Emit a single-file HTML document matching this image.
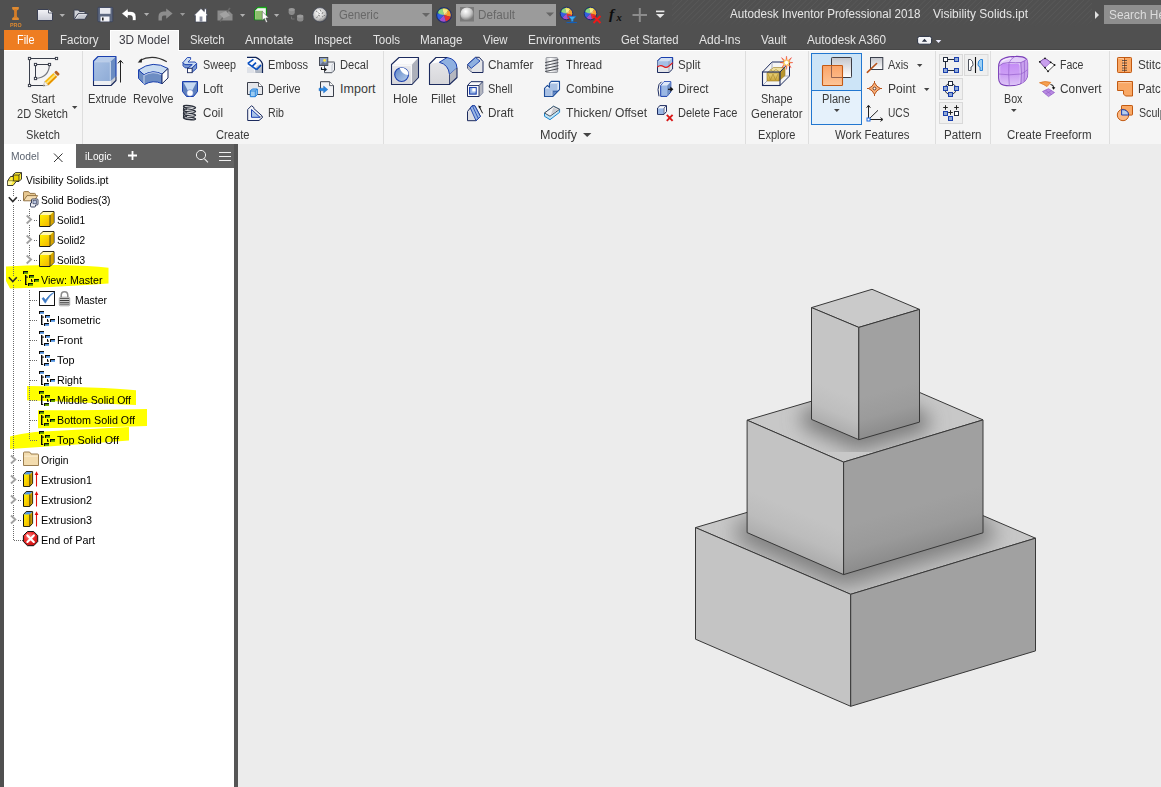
<!DOCTYPE html>
<html><head><meta charset="utf-8"><title>Autodesk Inventor Professional 2018 - Visibility Solids.ipt</title>
<style>
html,body{margin:0;padding:0}
body{width:1161px;height:787px;position:relative;overflow:hidden;background:#ececec;font-family:"Liberation Sans",sans-serif}
.t{position:absolute;white-space:nowrap;line-height:1;display:inline-block;transform-origin:0 0;}
svg{overflow:visible}
</style></head><body>
<div style="position:absolute;left:0px;top:0px;width:1161px;height:50px;background:#505050;"></div>
<div style="position:absolute;left:672px;top:0px;width:420px;height:27px;background:repeating-linear-gradient(135deg,rgba(255,255,255,0) 0px,rgba(255,255,255,0) 2.4px,rgba(255,255,255,0.05) 3.2px,rgba(255,255,255,0) 4px);-webkit-mask-image:linear-gradient(to bottom,#000 60%,transparent);mask-image:linear-gradient(to bottom,#000 60%,transparent)"></div>
<div style="position:absolute;left:0px;top:49px;width:1161px;height:1px;background:#474747;"></div>
<div style="position:absolute;left:0px;top:50px;width:4px;height:737px;background:#505050;"></div>
<div style="position:absolute;left:4px;top:50px;width:1157px;height:94px;background:#f5f5f5;"></div>
<div style="position:absolute;left:4px;top:30px;width:44px;height:20px;background:#ee7d21;"></div>
<span class="t " style="left:17.1px;top:34.3px;font-size:12.5px;color:#ffffff;transform:scaleX(0.870);">File</span>
<div style="position:absolute;left:110px;top:30px;width:69px;height:21px;background:#f5f5f5;border-top:1px solid #fff;border-left:1px solid #fff;border-right:1px solid #fff;box-sizing:border-box"></div>
<div style="position:absolute;left:4px;top:50px;width:106px;height:1px;background:#ffffff;"></div>
<div style="position:absolute;left:179px;top:50px;width:982px;height:1px;background:#ffffff;"></div>
<span class="t " style="left:60.1px;top:34.3px;font-size:12.5px;color:#e4e4e4;transform:scaleX(0.924);">Factory</span>
<span class="t " style="left:119.1px;top:34.3px;font-size:12.5px;color:#3a3a42;transform:scaleX(0.944);">3D Model</span>
<span class="t " style="left:190.1px;top:34.3px;font-size:12.5px;color:#e4e4e4;transform:scaleX(0.903);">Sketch</span>
<span class="t " style="left:245.1px;top:34.3px;font-size:12.5px;color:#e4e4e4;transform:scaleX(0.969);">Annotate</span>
<span class="t " style="left:314.1px;top:34.3px;font-size:12.5px;color:#e4e4e4;transform:scaleX(0.930);">Inspect</span>
<span class="t " style="left:372.6px;top:34.3px;font-size:12.5px;color:#e4e4e4;transform:scaleX(0.925);">Tools</span>
<span class="t " style="left:420.1px;top:34.3px;font-size:12.5px;color:#e4e4e4;transform:scaleX(0.941);">Manage</span>
<span class="t " style="left:483.1px;top:34.3px;font-size:12.5px;color:#e4e4e4;transform:scaleX(0.912);">View</span>
<span class="t " style="left:528.1px;top:34.3px;font-size:12.5px;color:#e4e4e4;transform:scaleX(0.948);">Environments</span>
<span class="t " style="left:621.1px;top:34.3px;font-size:12.5px;color:#e4e4e4;transform:scaleX(0.899);">Get Started</span>
<span class="t " style="left:699.1px;top:34.3px;font-size:12.5px;color:#e4e4e4;transform:scaleX(0.964);">Add-Ins</span>
<span class="t " style="left:761.1px;top:34.3px;font-size:12.5px;color:#e4e4e4;transform:scaleX(0.925);">Vault</span>
<span class="t " style="left:806.6px;top:34.3px;font-size:12.5px;color:#e4e4e4;transform:scaleX(0.939);">Autodesk A360</span>
<span class="t " style="left:730.1px;top:8.3px;font-size:12.5px;color:#e6e6e6;transform:scaleX(0.932);">Autodesk Inventor Professional 2018</span>
<span class="t " style="left:932.6px;top:8.3px;font-size:12.5px;color:#e6e6e6;transform:scaleX(0.958);">Visibility Solids.ipt</span>
<div style="position:absolute;left:332px;top:4px;width:100px;height:22px;background:#9b9b9b;"></div>
<span class="t " style="left:339.1px;top:9.3px;font-size:12.5px;color:#686868;transform:scaleX(0.903);">Generic</span>
<div style="position:absolute;left:456px;top:4px;width:100px;height:22px;background:#9b9b9b;"></div>
<span class="t " style="left:477.6px;top:9.3px;font-size:12.5px;color:#686868;transform:scaleX(0.934);">Default</span>
<div style="position:absolute;left:1104px;top:5px;width:57px;height:19px;background:#8e8e8e;"></div>
<span class="t " style="left:1108.6px;top:9.3px;font-size:12.5px;color:#dcdcdc;transform:scaleX(0.948);">Search Help &amp; Commands...</span>
<div style="position:absolute;left:82px;top:51px;width:1px;height:93px;background:#dedede;"></div>
<div style="position:absolute;left:383px;top:51px;width:1px;height:93px;background:#dedede;"></div>
<div style="position:absolute;left:745px;top:51px;width:1px;height:93px;background:#dedede;"></div>
<div style="position:absolute;left:808px;top:51px;width:1px;height:93px;background:#dedede;"></div>
<div style="position:absolute;left:935px;top:51px;width:1px;height:93px;background:#dedede;"></div>
<div style="position:absolute;left:990px;top:51px;width:1px;height:93px;background:#dedede;"></div>
<div style="position:absolute;left:1109px;top:51px;width:1px;height:93px;background:#dedede;"></div>
<div style="position:absolute;left:811px;top:53px;width:49px;height:70px;background:#e5f1fb;border:1px solid #2277d0;box-sizing:content-box"></div>
<div style="position:absolute;left:812px;top:54px;width:49px;height:36px;background:#cce4f7;border-bottom:1px solid #2277d0"></div>
<span class="t " style="left:30.6px;top:93.3px;font-size:12.5px;color:#3a3a3a;transform:scaleX(0.910);">Start</span>
<span class="t " style="left:16.6px;top:108.3px;font-size:12.5px;color:#3a3a3a;transform:scaleX(0.884);">2D Sketch</span>
<span class="t " style="left:88.1px;top:93.3px;font-size:12.5px;color:#3a3a3a;transform:scaleX(0.894);">Extrude</span>
<span class="t " style="left:133.1px;top:93.3px;font-size:12.5px;color:#3a3a3a;transform:scaleX(0.896);">Revolve</span>
<span class="t " style="left:393.1px;top:93.3px;font-size:12.5px;color:#3a3a3a;transform:scaleX(0.954);">Hole</span>
<span class="t " style="left:431.1px;top:93.3px;font-size:12.5px;color:#3a3a3a;transform:scaleX(0.929);">Fillet</span>
<span class="t " style="left:761.1px;top:93.3px;font-size:12.5px;color:#3a3a3a;transform:scaleX(0.872);">Shape</span>
<span class="t " style="left:751.1px;top:108.3px;font-size:12.5px;color:#3a3a3a;transform:scaleX(0.915);">Generator</span>
<span class="t " style="left:1004.1px;top:93.3px;font-size:12.5px;color:#3a3a3a;transform:scaleX(0.858);">Box</span>
<span class="t " style="left:822.1px;top:93.3px;font-size:12.5px;color:#3a3a3a;transform:scaleX(0.891);">Plane</span>
<span class="t " style="left:25.6px;top:129.3px;font-size:12.5px;color:#3a3a3a;transform:scaleX(0.890);">Sketch</span>
<span class="t " style="left:216.1px;top:129.3px;font-size:12.5px;color:#3a3a3a;transform:scaleX(0.893);">Create</span>
<span class="t " style="left:539.6px;top:129.3px;font-size:12.5px;color:#3a3a3a;transform:scaleX(1.005);">Modify</span>
<span class="t " style="left:758.1px;top:129.3px;font-size:12.5px;color:#3a3a3a;transform:scaleX(0.885);">Explore</span>
<span class="t " style="left:835.1px;top:129.3px;font-size:12.5px;color:#3a3a3a;transform:scaleX(0.911);">Work Features</span>
<span class="t " style="left:944.1px;top:129.3px;font-size:12.5px;color:#3a3a3a;transform:scaleX(0.930);">Pattern</span>
<span class="t " style="left:1007.1px;top:129.3px;font-size:12.5px;color:#3a3a3a;transform:scaleX(0.922);">Create Freeform</span>
<span class="t " style="left:203.1px;top:59.3px;font-size:12.5px;color:#3a3a3a;transform:scaleX(0.863);">Sweep</span>
<span class="t " style="left:203.1px;top:83.3px;font-size:12.5px;color:#3a3a3a;transform:scaleX(0.958);">Loft</span>
<span class="t " style="left:203.1px;top:107.3px;font-size:12.5px;color:#3a3a3a;transform:scaleX(0.928);">Coil</span>
<span class="t " style="left:268.1px;top:59.3px;font-size:12.5px;color:#3a3a3a;transform:scaleX(0.886);">Emboss</span>
<span class="t " style="left:268.1px;top:83.3px;font-size:12.5px;color:#3a3a3a;transform:scaleX(0.900);">Derive</span>
<span class="t " style="left:268.1px;top:107.3px;font-size:12.5px;color:#3a3a3a;transform:scaleX(0.853);">Rib</span>
<span class="t " style="left:340.1px;top:59.3px;font-size:12.5px;color:#3a3a3a;transform:scaleX(0.892);">Decal</span>
<span class="t " style="left:340.1px;top:83.3px;font-size:12.5px;color:#3a3a3a;">Import</span>
<span class="t " style="left:488.1px;top:59.3px;font-size:12.5px;color:#3a3a3a;transform:scaleX(0.949);">Chamfer</span>
<span class="t " style="left:488.1px;top:83.3px;font-size:12.5px;color:#3a3a3a;transform:scaleX(0.881);">Shell</span>
<span class="t " style="left:488.1px;top:107.3px;font-size:12.5px;color:#3a3a3a;transform:scaleX(0.942);">Draft</span>
<span class="t " style="left:565.6px;top:59.3px;font-size:12.5px;color:#3a3a3a;transform:scaleX(0.909);">Thread</span>
<span class="t " style="left:565.6px;top:83.3px;font-size:12.5px;color:#3a3a3a;transform:scaleX(0.960);">Combine</span>
<span class="t " style="left:565.6px;top:107.3px;font-size:12.5px;color:#3a3a3a;transform:scaleX(0.966);">Thicken/ Offset</span>
<span class="t " style="left:678.1px;top:59.3px;font-size:12.5px;color:#3a3a3a;transform:scaleX(0.925);">Split</span>
<span class="t " style="left:678.1px;top:83.3px;font-size:12.5px;color:#3a3a3a;transform:scaleX(0.935);">Direct</span>
<span class="t " style="left:678.1px;top:107.3px;font-size:12.5px;color:#3a3a3a;transform:scaleX(0.883);">Delete Face</span>
<span class="t " style="left:888.1px;top:59.3px;font-size:12.5px;color:#3a3a3a;transform:scaleX(0.868);">Axis</span>
<span class="t " style="left:888.1px;top:83.3px;font-size:12.5px;color:#3a3a3a;transform:scaleX(0.965);">Point</span>
<span class="t " style="left:888.1px;top:107.3px;font-size:12.5px;color:#3a3a3a;transform:scaleX(0.815);">UCS</span>
<span class="t " style="left:1060.1px;top:59.3px;font-size:12.5px;color:#3a3a3a;transform:scaleX(0.845);">Face</span>
<span class="t " style="left:1060.1px;top:83.3px;font-size:12.5px;color:#3a3a3a;transform:scaleX(0.949);">Convert</span>
<span class="t " style="left:1138.1px;top:59.3px;font-size:12.5px;color:#3a3a3a;transform:scaleX(0.940);">Stitch</span>
<span class="t " style="left:1138.4px;top:83.3px;font-size:12.5px;color:#3a3a3a;transform:scaleX(0.900);">Patch</span>
<span class="t " style="left:1138.6px;top:107.3px;font-size:12.5px;color:#3a3a3a;transform:scaleX(0.850);">Sculpt</span>
<div style="position:absolute;left:4px;top:144px;width:230px;height:643px;background:#ffffff;"></div>
<div style="position:absolute;left:76px;top:144px;width:162px;height:24px;background:#626262;"></div>
<div style="position:absolute;left:234px;top:144px;width:4px;height:643px;background:#555555;"></div>
<span class="t " style="left:11.1px;top:150.6px;font-size:11px;color:#5c6470;transform:scaleX(0.934);">Model</span>
<span class="t " style="left:84.6px;top:150.6px;font-size:11px;color:#ffffff;transform:scaleX(0.921);">iLogic</span>
<svg style="position:absolute;left:0;top:0" width="240" height="787" viewBox="0 0 240 787"><path d="M6,266.5 Q30,264.6 60,265 Q90,265.6 108.5,267.8 L108.5,283.5 Q80,285.6 40,287.6 L10,288.4 L6,281 Z" fill="#ffff00"/><path d="M27,386 Q60,386.4 90,387.6 Q120,388.8 136,390.2 L136,405 Q100,403.6 60,401.6 L27,400.2 Z" fill="#ffff00"/><path d="M38,410.2 Q90,410.4 147,409 L147,426 Q100,427.4 38,428.2 Z" fill="#ffff00"/><path d="M35,432 Q80,429.4 129,427 L129,440.6 Q70,445.4 10,449 L10,436.4 Q20,434 35,432 Z" fill="#ffff00"/></svg>
<span class="t " style="left:25.6px;top:174.6px;font-size:11px;color:#000000;transform:scaleX(0.946);">Visibility Solids.ipt</span>
<span class="t " style="left:41.1px;top:194.6px;font-size:11px;color:#000000;transform:scaleX(0.932);">Solid Bodies(3)</span>
<span class="t " style="left:57.1px;top:214.6px;font-size:11px;color:#000000;transform:scaleX(0.916);">Solid1</span>
<span class="t " style="left:57.1px;top:234.6px;font-size:11px;color:#000000;transform:scaleX(0.916);">Solid2</span>
<span class="t " style="left:57.1px;top:254.6px;font-size:11px;color:#000000;transform:scaleX(0.916);">Solid3</span>
<span class="t " style="left:41.1px;top:274.6px;font-size:11px;color:#000000;transform:scaleX(0.971);">View: Master</span>
<span class="t " style="left:74.6px;top:294.6px;font-size:11px;color:#000000;transform:scaleX(0.952);">Master</span>
<span class="t " style="left:57.1px;top:314.6px;font-size:11px;color:#000000;transform:scaleX(0.975);">Isometric</span>
<span class="t " style="left:57.1px;top:334.6px;font-size:11px;color:#000000;transform:scaleX(0.993);">Front</span>
<span class="t " style="left:57.1px;top:354.6px;font-size:11px;color:#000000;transform:scaleX(0.988);">Top</span>
<span class="t " style="left:57.1px;top:374.6px;font-size:11px;color:#000000;transform:scaleX(0.973);">Right</span>
<span class="t " style="left:57.1px;top:394.6px;font-size:11px;color:#000000;transform:scaleX(0.955);">Middle Solid Off</span>
<span class="t " style="left:57.1px;top:414.6px;font-size:11px;color:#000000;transform:scaleX(0.976);">Bottom Solid Off</span>
<span class="t " style="left:57.1px;top:434.6px;font-size:11px;color:#000000;transform:scaleX(0.987);">Top Solid Off</span>
<span class="t " style="left:41.1px;top:454.6px;font-size:11px;color:#000000;transform:scaleX(0.936);">Origin</span>
<span class="t " style="left:41.1px;top:474.6px;font-size:11px;color:#000000;transform:scaleX(0.981);">Extrusion1</span>
<span class="t " style="left:41.1px;top:494.6px;font-size:11px;color:#000000;transform:scaleX(0.981);">Extrusion2</span>
<span class="t " style="left:41.1px;top:514.6px;font-size:11px;color:#000000;transform:scaleX(0.981);">Extrusion3</span>
<span class="t " style="left:41.1px;top:534.6px;font-size:11px;color:#000000;transform:scaleX(0.981);">End of Part</span>
<svg style="position:absolute;left:0px;top:0px" width="1161" height="787" viewBox="0 0 1161 787"><defs><filter id="blur1" x="-30%" y="-30%" width="160%" height="160%"><feGaussianBlur stdDeviation="11"/></filter><filter id="blur2" x="-30%" y="-30%" width="160%" height="160%"><feGaussianBlur stdDeviation="9.5"/></filter><clipPath id="cbt"><polygon points="695.5,527.6 882.6,472.4 1035.5,538.2 850.7,594.3"/></clipPath><clipPath id="cmt"><polygon points="747.1,420.2 887.8,378.7 983,419.9 843.6,462.1"/></clipPath><linearGradient id="gml" gradientUnits="userSpaceOnUse" x1="747.1" y1="532.6" x2="763.1" y2="495.9"><stop offset="0" stop-color="#adadad"/><stop offset="0.45" stop-color="#bcbcbc"/><stop offset="1" stop-color="#c3c3c3"/></linearGradient><linearGradient id="gmr" gradientUnits="userSpaceOnUse" x1="843.6" y1="574.6" x2="830.4" y2="530.5"><stop offset="0" stop-color="#8c8c8c"/><stop offset="0.45" stop-color="#9a9a9a"/><stop offset="1" stop-color="#a0a0a0"/></linearGradient><linearGradient id="gtl" gradientUnits="userSpaceOnUse" x1="811.5" y1="419.4" x2="825.7" y2="386.3"><stop offset="0" stop-color="#adadad"/><stop offset="0.45" stop-color="#bebebe"/><stop offset="1" stop-color="#c5c5c5"/></linearGradient><linearGradient id="gtr" gradientUnits="userSpaceOnUse" x1="858.8" y1="439.7" x2="847.7" y2="401.3"><stop offset="0" stop-color="#8c8c8c"/><stop offset="0.45" stop-color="#9b9b9b"/><stop offset="1" stop-color="#a1a1a1"/></linearGradient></defs><polygon points="695.5,527.6 882.6,472.4 1035.5,538.2 850.7,594.3" fill="#c8c8c8"/><g clip-path="url(#cbt)"><polygon points="747.1,532.6 843.6,574.6 983,532.8 887.8,491.2" fill="#7e7e7e" filter="url(#blur1)" stroke="#7e7e7e" stroke-width="24" stroke-linejoin="round"/></g><polygon points="695.5,527.6 882.6,472.4 1035.5,538.2 850.7,594.3" fill="none" stroke="#383838" stroke-width="1" stroke-linejoin="round"/><polygon points="695.5,527.6 850.7,594.3 850.7,706.3 695.5,639.2" fill="#c4c4c4" stroke="#383838" stroke-width="1" stroke-linejoin="round"/><polygon points="850.7,594.3 1035.5,538.2 1035.5,650.9 850.7,706.3" fill="#a1a1a1" stroke="#383838" stroke-width="1" stroke-linejoin="round"/><polygon points="747.1,420.2 887.8,378.7 983,419.9 843.6,462.1" fill="#c8c8c8"/><g clip-path="url(#cmt)"><polygon points="811.5,419.4 858.8,439.7 919.5,422.1 872,401.4" fill="#7e7e7e" filter="url(#blur2)" stroke="#7e7e7e" stroke-width="22" stroke-linejoin="round"/></g><polygon points="747.1,420.2 887.8,378.7 983,419.9 843.6,462.1" fill="none" stroke="#383838" stroke-width="1" stroke-linejoin="round"/><polygon points="747.1,420.2 843.6,462.1 843.6,574.6 747.1,532.6" fill="url(#gml)" stroke="#383838" stroke-width="1" stroke-linejoin="round"/><polygon points="843.6,462.1 983,419.9 983,532.8 843.6,574.6" fill="url(#gmr)" stroke="#383838" stroke-width="1" stroke-linejoin="round"/><polygon points="811.5,307.6 872,289.3 919.5,309.4 858.8,327.4" fill="#cacaca" stroke="#383838" stroke-width="1" stroke-linejoin="round"/><polygon points="811.5,307.6 858.8,327.4 858.8,439.7 811.5,419.4" fill="url(#gtl)" stroke="#383838" stroke-width="1" stroke-linejoin="round"/><polygon points="858.8,327.4 919.5,309.4 919.5,422.1 858.8,439.7" fill="url(#gtr)" stroke="#383838" stroke-width="1" stroke-linejoin="round"/></svg>
<svg style="position:absolute;left:0px;top:0px" width="1161" height="787" viewBox="0 0 1161 787"><defs><linearGradient id="gdoc" x1="0" y1="0" x2="0" y2="1"><stop offset="0" stop-color="#f4f4f8"/><stop offset="1" stop-color="#c8cad4"/></linearGradient><radialGradient id="gsph" cx="0.4" cy="0.3" r="0.7"><stop offset="0" stop-color="#ffffff"/><stop offset="0.6" stop-color="#c8c8c8"/><stop offset="1" stop-color="#7a7a7a"/></radialGradient><radialGradient id="gtex" cx="0.4" cy="0.35" r="0.7"><stop offset="0" stop-color="#ffffff"/><stop offset="0.7" stop-color="#c0c0c0"/><stop offset="1" stop-color="#555"/></radialGradient></defs><path d="M12.2,7 H18.8 V9.2 Q17,9.6 16.8,11 V16 Q17,17.6 18.8,18 V20 H12.2 V18 Q14,17.6 14.2,16 V11 Q14,9.6 12.2,9.2 Z" fill="#e08a30"/><path d="M14.2,9 H16.8 V18 H14.2 Z" fill="#c87020" opacity="0.5"/><path d="M37.5,9.5 H48.5 L52.5,13 V20.5 H37.5 Z" fill="url(#gdoc)" stroke="#3b4052" stroke-width="1"/><path d="M48.5,9.5 V13 H52.5" fill="#fff" stroke="#3b4052" stroke-width="0.8"/><polygon points="59.5,14 65,14 62.25,17" fill="#b0b0b0"/><path d="M74,19 V10.5 Q74,10 74.5,10 H78.5 L79.5,11.5 H84.5 Q85,11.5 85,12 V13.5" fill="#d0d2d8" stroke="#3b4052" stroke-width="1"/><path d="M74.2,19.3 L78,13.7 H88.3 L84.8,19.3 Z" fill="#c4c7d0" stroke="#3b4052" stroke-width="1" stroke-linejoin="round"/><path d="M76,18.5 L78.8,14.6 H86.5" fill="none" stroke="#f2f2f6" stroke-width="0.8"/><rect x="97.8" y="7.3" width="15" height="14.4" rx="1" fill="#5d6880" stroke="#39415a" stroke-width="0.8"/><rect x="100" y="8" width="10.5" height="5.8" fill="#e9eaf0"/><rect x="100.5" y="16.5" width="9" height="5" fill="#f4f4f8"/><rect x="102" y="17.5" width="1.6" height="3" fill="#222"/><path d="M121.6,13.6 L128,8.6 V11.4 H131 Q136,11.6 136,16.8 V20.5 H132.4 V17.6 Q132.4,15.6 130.4,15.6 H128 V18.7 Z" fill="#ffffff" stroke="#3a3a3a" stroke-width="0.6"/><polygon points="144,13 149.2,13 146.6,16" fill="#b0b0b0"/><path d="M172.6,13.6 L166.2,8.6 V11.4 H163.4 Q158.5,11.6 158.5,16.8 V20.5 H161.9 V17.6 Q161.9,15.6 163.9,15.6 H166.2 V18.7 Z" fill="#8c8c8c"/><polygon points="180,13 185.2,13 182.6,16" fill="#9a9a9a"/><path d="M193.8,15.6 L201,8.4 L204.3,11.6 V8.8 H206.5 V13.8 L208.2,15.6 H206.6 V22 H195.4 V15.6 Z" fill="#ffffff" stroke="#3a3f50" stroke-width="0.7" stroke-linejoin="round"/><rect x="199.6" y="16.5" width="2.8" height="5.3" fill="#8a8fa0"/><path d="M217.5,10.5 H228.5 L232.5,14.5 V20.5 H217.5 Z" fill="#8c8c8c"/><path d="M220,21.5 L230,8" stroke="#6a6a6a" stroke-width="1.6" fill="none"/><path d="M219.5,14 L226,11 L230,15.5 L223.5,18.5 Z" fill="#a2a2a2"/><polygon points="240,14 245.2,14 242.6,17" fill="#b0b0b0"/><path d="M254.6,10.3 L257.8,7.4 H266.4 V16.8 L263.4,19.8 H254.6 Z" fill="#f4f4f4" stroke="#0e8a10" stroke-width="1.1" stroke-linejoin="round"/><rect x="255.2" y="10.8" width="7.6" height="8.6" fill="#8cbf6c"/><path d="M257.8,7.6 H266.2" stroke="#18b018" stroke-width="1.2"/><path d="M262.3,11.6 L262.3,20.3 L264.4,18.5 L266,22.6 L267.5,22 L265.9,18 L268.6,17.8 Z" fill="#ffffff" stroke="#444" stroke-width="0.5"/><polygon points="274,14 279.2,14 276.6,17" fill="#b0b0b0"/><rect x="288.6" y="8.4" width="6.2" height="6.6" rx="2.4" fill="#8a8a8a"/><ellipse cx="291.7" cy="9.6" rx="3.1" ry="1.6" fill="#9a9a9a"/><rect x="297" y="15" width="6.4" height="6.6" rx="2.4" fill="#8a8a8a"/><ellipse cx="300.2" cy="16.2" rx="3.2" ry="1.6" fill="#9a9a9a"/><path d="M291.5,16.5 V19 H294.5" stroke="#707070" stroke-width="1" fill="none"/><circle cx="320" cy="14.8" r="7.2" fill="url(#gtex)" stroke="#3a3f50" stroke-width="0.7"/><path d="M316,11 l1.5,1 M320,9.5 l1,2 M323,12 l-1,2 M318,15 l2,1 M322,17 l1.5,-1 M316.5,18 l1,-1.5 M320,19.5 l1,-1 M324,15 l1,1 M318.5,12.5 l1,1.5" stroke="#707070" stroke-width="0.8" fill="none"/><polygon points="422,13 430,13 426.0,17" fill="#666"/><path d="M444,15 L442.08,7.85 A7.4,7.4 0 0 1 449.23,9.77 Z" fill="#f0e050"/><path d="M444,15 L449.23,9.77 A7.4,7.4 0 0 1 451.15,16.92 Z" fill="#f4a030"/><path d="M444,15 L451.15,16.92 A7.4,7.4 0 0 1 445.92,22.15 Z" fill="#e83030"/><path d="M444,15 L445.92,22.15 A7.4,7.4 0 0 1 438.77,20.23 Z" fill="#a050d0"/><path d="M444,15 L438.77,20.23 A7.4,7.4 0 0 1 436.85,13.08 Z" fill="#3060e0"/><path d="M444,15 L436.85,13.08 A7.4,7.4 0 0 1 442.08,7.85 Z" fill="#50c040"/><circle cx="444" cy="15" r="7.4" fill="none" stroke="#1b2c6e" stroke-width="1.1"/><ellipse cx="442.89" cy="12.04" rx="4.44" ry="2.9600000000000004" fill="#fff" opacity="0.35"/><rect x="460" y="7" width="14" height="14.5" fill="#7a7a7a"/><circle cx="467" cy="14" r="6.6" fill="url(#gsph)"/><polygon points="546,12.5 554,12.5 550.0,16.5" fill="#666"/><path d="M566.5,13.5 L564.87,7.41 A6.3,6.3 0 0 1 570.95,9.05 Z" fill="#f0e050"/><path d="M566.5,13.5 L570.95,9.05 A6.3,6.3 0 0 1 572.59,15.13 Z" fill="#f4a030"/><path d="M566.5,13.5 L572.59,15.13 A6.3,6.3 0 0 1 568.13,19.59 Z" fill="#e83030"/><path d="M566.5,13.5 L568.13,19.59 A6.3,6.3 0 0 1 562.05,17.95 Z" fill="#a050d0"/><path d="M566.5,13.5 L562.05,17.95 A6.3,6.3 0 0 1 560.41,11.87 Z" fill="#3060e0"/><path d="M566.5,13.5 L560.41,11.87 A6.3,6.3 0 0 1 564.87,7.41 Z" fill="#50c040"/><circle cx="566.5" cy="13.5" r="6.3" fill="none" stroke="#1b2c6e" stroke-width="1"/><ellipse cx="565.555" cy="10.98" rx="3.78" ry="2.52" fill="#fff" opacity="0.35"/><path d="M568.3,16.3 H576 L573.2,19.4 V21.6 H571.2 V19.4 Z" fill="#40b0f0" stroke="#1060c0" stroke-width="0.6"/><path d="M566.5,22.6 H577" stroke="#1060c0" stroke-width="1"/><path d="M590.5,13.5 L588.87,7.41 A6.3,6.3 0 0 1 594.95,9.05 Z" fill="#f0e050"/><path d="M590.5,13.5 L594.95,9.05 A6.3,6.3 0 0 1 596.59,15.13 Z" fill="#f4a030"/><path d="M590.5,13.5 L596.59,15.13 A6.3,6.3 0 0 1 592.13,19.59 Z" fill="#e83030"/><path d="M590.5,13.5 L592.13,19.59 A6.3,6.3 0 0 1 586.05,17.95 Z" fill="#a050d0"/><path d="M590.5,13.5 L586.05,17.95 A6.3,6.3 0 0 1 584.41,11.87 Z" fill="#3060e0"/><path d="M590.5,13.5 L584.41,11.87 A6.3,6.3 0 0 1 588.87,7.41 Z" fill="#50c040"/><circle cx="590.5" cy="13.5" r="6.3" fill="none" stroke="#1b2c6e" stroke-width="1"/><ellipse cx="589.555" cy="10.98" rx="3.78" ry="2.52" fill="#fff" opacity="0.35"/><path d="M593.5,16 L600.5,23 M600.5,16 L593.5,23" stroke="#f01818" stroke-width="1.8" fill="none"/><path d="M639.8,8 V22 M632.5,15 H647" stroke="#8c8c8c" stroke-width="2" fill="none"/><rect x="656" y="10.6" width="8.4" height="1.6" fill="#e8e8e8"/><polygon points="656,14 664.4,14 660.2,18" fill="#e8e8e8"/><polygon points="1095,11 1099,15 1095,19" fill="#e0e0e0"/><rect x="917.6" y="36.4" width="14" height="7.8" rx="2.2" fill="#f4f5f8" stroke="#2b3242" stroke-width="1"/><polygon points="921.8,41.8 927.2,41.8 924.5,38.8" fill="#2b3242"/><polygon points="935.7,39.9 941.3,39.9 938.5,43.1" fill="#eeeeff"/></svg>
<span class="t " style="left:9.9px;top:21.8px;font-size:6px;color:#e08a30;transform:scaleX(0.885);font-weight:bold;">PRO</span>
<span class="t" style="left:609px;top:5.5px;font-size:15.5px;color:#0c0c0c;font-family:'Liberation Serif',serif;font-style:italic;font-weight:bold;">f</span>
<span class="t" style="left:616.5px;top:13px;font-size:10.5px;color:#0c0c0c;font-family:'Liberation Serif',serif;font-style:italic;font-weight:bold;">x</span>
<svg style="position:absolute;left:0px;top:0px" width="1161" height="787" viewBox="0 0 1161 787"><defs><linearGradient id="gbl" x1="0" y1="0" x2="1" y2="1"><stop offset="0" stop-color="#a9c1e4"/><stop offset="1" stop-color="#8eabd6"/></linearGradient><linearGradient id="ghole" x1="0" y1="0" x2="1" y2="1"><stop offset="0" stop-color="#5f86c6"/><stop offset="1" stop-color="#b7cdec"/></linearGradient><linearGradient id="gor" x1="0" y1="0" x2="0" y2="1"><stop offset="0" stop-color="#fba468"/><stop offset="1" stop-color="#fdc597"/></linearGradient><linearGradient id="ggr" x1="0" y1="0" x2="0" y2="1"><stop offset="0" stop-color="#c4c6cc"/><stop offset="1" stop-color="#ffffff"/></linearGradient><linearGradient id="gface" x1="0" y1="0" x2="0" y2="1"><stop offset="0" stop-color="#e9e9ec"/><stop offset="1" stop-color="#d6d6da"/></linearGradient><radialGradient id="gpur" cx="0.4" cy="0.35" r="0.75"><stop offset="0" stop-color="#ecdcfb"/><stop offset="0.55" stop-color="#cfa6f2"/><stop offset="1" stop-color="#b98ae6"/></radialGradient><linearGradient id="ggold" x1="0" y1="0" x2="0" y2="1"><stop offset="0" stop-color="#e9d27a"/><stop offset="1" stop-color="#c9a43a"/></linearGradient><radialGradient id="gspark" cx="0.5" cy="0.5" r="0.5"><stop offset="0" stop-color="#ffffff"/><stop offset="0.35" stop-color="#fff36a"/><stop offset="0.7" stop-color="#ff8a1a"/><stop offset="1" stop-color="#e82020"/></radialGradient></defs><path d="M29.5,85.5 V58.5 H56.5 M29.5,85.5 H43.5" fill="none" stroke="#3a3f4b" stroke-width="1"/><path d="M35.5,78.5 V64.5 H49.5" fill="none" stroke="#3a3f4b" stroke-width="1"/><path d="M49.5,64.5 Q49,77.5 35.5,78.5" fill="none" stroke="#777a82" stroke-width="1.2"/><rect x="27.9" y="56.9" width="3.2" height="3.2" fill="#3a3f4b"/><rect x="28.9" y="57.9" width="1.2" height="1.2" fill="#fff"/><rect x="54.9" y="56.9" width="3.2" height="3.2" fill="#3a3f4b"/><rect x="55.9" y="57.9" width="1.2" height="1.2" fill="#fff"/><rect x="27.9" y="83.9" width="3.2" height="3.2" fill="#3a3f4b"/><rect x="28.9" y="84.9" width="1.2" height="1.2" fill="#fff"/><rect x="33.9" y="62.9" width="3.2" height="3.2" fill="#3a3f4b"/><rect x="34.9" y="63.9" width="1.2" height="1.2" fill="#fff"/><rect x="47.9" y="62.9" width="3.2" height="3.2" fill="#3a3f4b"/><rect x="48.9" y="63.9" width="1.2" height="1.2" fill="#fff"/><rect x="33.9" y="76.9" width="3.2" height="3.2" fill="#3a3f4b"/><rect x="34.9" y="77.9" width="1.2" height="1.2" fill="#fff"/><g transform="translate(43.4,86.2) rotate(-43.5)"><polygon points="0,0 4.4,-2.7 4.4,2.7" fill="#f7f3ea" stroke="#9a9388" stroke-width="0.4"/><polygon points="0,0 1.5,-0.9 1.5,0.9" fill="#555"/><rect x="4.4" y="-2.7" width="12" height="5.4" fill="#f9bb10"/><rect x="4.4" y="-1" width="12" height="1.8" fill="#fde27a"/><rect x="4.4" y="1.2" width="12" height="1.5" fill="#e79000"/><rect x="16.4" y="-2.7" width="1" height="5.4" fill="#e0e0e0"/><rect x="17.4" y="-2.7" width="2.8" height="5.4" rx="0.9" fill="#b8621e"/></g><polygon points="72,106 77.4,106 74.7,109" fill="#444"/><polygon points="93.5,85.5 93.5,61 98,56.5 116,56.5 116,80.5 111,85.5" fill="#eef0f3" stroke="none"/><polygon points="93.5,61 98,56.5 116,56.5 111,61" fill="#b9cdea"/><rect x="93.5" y="61" width="17.5" height="20" fill="url(#gbl)"/><polygon points="111,61 116,56.5 116,76.5 111,81" fill="#6b8cc2"/><polygon points="111,81 116,76.5 116,80.5 111,85.5" fill="#c9cdd4"/><path d="M94.5,61.8 H110.3 V80.6" fill="none" stroke="#cfdcf0" stroke-width="0.8"/><path d="M93.5,81 V61 L98,56.5 H116 V76.5" fill="none" stroke="#1a3fae" stroke-width="1.1" stroke-linejoin="round"/><path d="M93.5,81 V85.5 H111 L116,80.5 V76.5" fill="none" stroke="#1c2b5e" stroke-width="1.1" stroke-linejoin="round"/><path d="M120.5,82.5 V61" stroke="#222" stroke-width="1" fill="none"/><path d="M118,63.3 L120.5,60.3 L123,63.3" stroke="#222" stroke-width="1" fill="none"/><path d="M166.8,61.8 Q153,53.5 139.6,60.6" fill="none" stroke="#333" stroke-width="1.1"/><polygon points="137.6,62.6 142,58.2 141.8,62.4" fill="#222"/><path d="M138.5,70 Q153,59.5 168,68.5 L162,74.2 Q153,69.5 144,74.8 Z" fill="#c9dcf1" stroke="#1a3fae" stroke-width="1" stroke-linejoin="round"/><path d="M138.5,70 L144,74.8 Q153,69.5 162,74.2 V83.6 Q153,79.5 144.5,84.5 L138.5,78.3 Z" fill="#6d8dc3" stroke="#1a3fae" stroke-width="1" stroke-linejoin="round"/><path d="M144,74.8 V84.2" stroke="#dfe8f6" stroke-width="0.8"/><path d="M144.5,75.2 Q153,70.3 161.6,74.8" fill="none" stroke="#e6eefa" stroke-width="0.8"/><polygon points="162,74.2 168,68.5 168,78 162,83.8" fill="#ffffff" stroke="#1c2b5e" stroke-width="1" stroke-linejoin="round"/><polygon points="391.5,64.5 399,57.5 418.5,57.5 412,64.5" fill="#fbfbfc"/><rect x="391.5" y="64.5" width="20.5" height="20" fill="url(#gface)"/><polygon points="412,64.5 418.5,57.5 418.5,77.5 412,84.5" fill="#adb0ba"/><path d="M391.5,64.5 L399,57.5 H418.5 V77.5 L412,84.5 H391.5 Z" fill="none" stroke="#1c2b5e" stroke-width="1.1" stroke-linejoin="round"/><path d="M392.5,65.3 H411.3 V83.6" fill="none" stroke="#fff" stroke-width="0.8"/><circle cx="401.6" cy="74.6" r="6.9" fill="url(#ghole)" stroke="#1a3fae" stroke-width="1.1"/><path d="M399.6,68.1 Q405,66.6 408.3,72.3 Q408.6,73.6 408.3,75 Q402,74.8 399.6,68.1 Z" fill="#ffffff"/><path d="M429.5,84.5 V64 L436,57.5 H447 L439.3,62.3 Q448.5,64.5 449.5,74.5 V84.5 Z" fill="url(#gface)"/><path d="M429.5,64 L436,57.5 H447 L439.3,62.3 Z" fill="#fdfdfd"/><path d="M439.3,62.3 L447,57.5 Q456.5,59 457,68 L449.5,74.5 Q448.5,64.5 439.3,62.3 Z" fill="#8fb0e0" stroke="#1a3fae" stroke-width="1" stroke-linejoin="round"/><polygon points="449.5,74.5 457,68 457,77.5 449.5,84.5" fill="#b4b7c0"/><path d="M447,57.5 H436 L429.5,64 V84.5 H449.5 L457,77.5 V68" fill="none" stroke="#1c2b5e" stroke-width="1.1" stroke-linejoin="round"/><path d="M449.5,74.5 V84.5" stroke="#1c2b5e" stroke-width="0.8"/><path d="M762.5,72 L772,62 H789.5 V76 L780,85.5" fill="none" stroke="#1c2b5e" stroke-width="1"/><path d="M772,62 V76 H789.5 M772,76 L762.5,85.5" fill="none" stroke="#8a93ad" stroke-width="0.7"/><polygon points="767,73 773.5,67.5 785,67.5 779,73" fill="#efe0a0" stroke="#9a7a20" stroke-width="0.6"/><polygon points="779,73 785,67.5 785,75.5 779,81" fill="#b8952e" stroke="#9a7a20" stroke-width="0.6"/><rect x="767" y="73" width="12" height="8" fill="url(#ggold)" stroke="#9a7a20" stroke-width="0.6"/><path d="M768,74 L770.5,80 L773,74 L775.5,80 L778,74 M770,69.5 l3,2 l3,-2 l3,2" fill="none" stroke="#a88628" stroke-width="0.6"/><rect x="762.5" y="72" width="17.5" height="13.5" fill="none" stroke="#1c2b5e" stroke-width="1.1"/><path d="M780,72 L789.5,62" stroke="#1c2b5e" stroke-width="1"/><path d="M786.5,56 L787.4,61 L791.6,57.5 L788.8,62 L793,62.6 L788.8,63.4 L791.2,67.8 L787.3,64.6 L786.5,69.5 L785.7,64.6 L781.8,67.8 L784.2,63.4 L780,62.6 L784.2,62 L781.4,57.5 L785.6,61 Z" fill="url(#gspark)" stroke="#e82020" stroke-width="0.3"/><circle cx="786.5" cy="62.7" r="1.8" fill="#fff"/><rect x="831.5" y="57.5" width="20" height="20" rx="0.8" fill="url(#ggr)" stroke="#3c3c44" stroke-width="1"/><rect x="822.5" y="65.5" width="20" height="20" rx="0.8" fill="url(#gor)" stroke="#c45a14" stroke-width="1.1"/><path d="M831.5,66 V77.5 H842" fill="none" stroke="#8a5a4a" stroke-width="0.9"/><polygon points="834,109 839.6,109 836.8,112" fill="#444"/><defs><linearGradient id="gpf" x1="0" y1="0" x2="0" y2="1"><stop offset="0" stop-color="#c48cf6"/><stop offset="0.55" stop-color="#cda0f4"/><stop offset="1" stop-color="#dcc2f6"/></linearGradient></defs><path d="M998.6,67 Q998.6,60.5 1003.5,58.6 Q1008,56.4 1016,56.4 Q1023,56.2 1026,58.6 Q1027.8,60 1027.6,64 V74 Q1027.6,79 1023,82.4 Q1019,85.6 1010,85.8 Q1003,85.9 1000.5,83.5 Q998.6,81.5 998.6,78 Z" fill="#e3cdf9" stroke="#7b3fb8" stroke-width="1.1"/><path d="M1020.8,63 Q1024,61.5 1027.2,59.2 Q1027.8,60 1027.6,64 V74 Q1027.6,79 1023,82.4 L1020.9,83.9 Q1021.4,73 1020.8,63 Z" fill="#c9a2ee"/><path d="M1000.2,67.5 Q1000.4,64 1004,63.6 Q1011,64.4 1017.5,63.8 Q1019.6,63.8 1019.6,66.5 Q1020,75 1019.6,82 Q1019.4,84 1016,84.4 Q1010,85 1003.5,84.2 Q1000.4,83.6 1000.2,80.5 Z" fill="url(#gpf)"/><path d="M998.9,66.2 Q1002,62.4 1009,62.6 Q1016,63 1020.8,62.6 Q1024,61.4 1027.2,59" fill="none" stroke="#8a52c4" stroke-width="0.8"/><path d="M1020.8,62.6 Q1021.6,73 1020.9,84" fill="none" stroke="#8a52c4" stroke-width="0.8"/><path d="M1009,62.6 Q1008.3,74 1009.3,85.7 M998.7,74 Q1009,75.6 1020.9,74 Q1024.5,72.6 1027.5,69.6 M1009,62.6 Q1011,59 1014.8,56.5 M1024.3,60.8 Q1024.8,70 1024.1,81.4" fill="none" stroke="#9560cc" stroke-width="0.7"/><path d="M1001.5,61.5 Q1005,59 1011,58.2" fill="none" stroke="#f6eefd" stroke-width="1.2"/><polygon points="1011,109 1016.6,109 1013.8,112" fill="#444"/></svg>
<svg style="position:absolute;left:0px;top:0px" width="1161" height="787" viewBox="0 0 1161 787"><path d="M183,62.5 V65.8 L185,67.8 H188.5 L192.3,64.6 H184.8 Z" fill="#7d9bd0" stroke="#1a3fae" stroke-width="0.9" stroke-linejoin="round"/><path d="M196.6,63.6 V68.4 L192,72.4 V68.4 Z" fill="#7d9bd0" stroke="#1a3fae" stroke-width="0.9" stroke-linejoin="round"/><path d="M183,62.5 L187.3,57.5 H190.6 V59.4 L188,62 H195.2 L196.6,63.6 L191.6,68.4 H187.6 L192.3,64.6 H184.8 Z" fill="#c9dbf2" stroke="#1a3fae" stroke-width="0.9" stroke-linejoin="round"/><rect x="187.5" y="68.3" width="4.6" height="4.4" fill="#fff" stroke="#1c2b5e" stroke-width="0.9"/><path d="M182.5,81.5 H197.5 V91.5 L193.5,96.5 H186.5 L182.5,91.5 Z" fill="#5d7fbd" stroke="#1a3fae" stroke-width="1" stroke-linejoin="round"/><path d="M183.6,82.4 H196.4 L192.2,90.6 H187.8 Z" fill="#c7daf2"/><circle cx="190" cy="93" r="3.3" fill="#fff" stroke="#1a3fae" stroke-width="0.4"/><ellipse cx="189.5" cy="107.0" rx="6" ry="1.35" transform="rotate(7 189.5 107.0)" fill="#dcdde0" stroke="#2b303b" stroke-width="1.45"/><ellipse cx="189.5" cy="110.75" rx="6" ry="1.35" transform="rotate(7 189.5 110.75)" fill="#dcdde0" stroke="#2b303b" stroke-width="1.45"/><ellipse cx="189.5" cy="114.5" rx="6" ry="1.35" transform="rotate(7 189.5 114.5)" fill="#dcdde0" stroke="#2b303b" stroke-width="1.45"/><ellipse cx="189.5" cy="118.25" rx="6" ry="1.35" transform="rotate(7 189.5 118.25)" fill="#dcdde0" stroke="#2b303b" stroke-width="1.45"/><path d="M183.6,107.4 V110.2" stroke="#2b303b" stroke-width="1.2"/><path d="M187,109.2 L193.5,108.2" stroke="#f2f2f3" stroke-width="0.9"/><path d="M183.6,111.15 V113.95" stroke="#2b303b" stroke-width="1.2"/><path d="M187,112.95 L193.5,111.95" stroke="#f2f2f3" stroke-width="0.9"/><path d="M183.6,114.9 V117.7" stroke="#2b303b" stroke-width="1.2"/><path d="M187,116.7 L193.5,115.7" stroke="#f2f2f3" stroke-width="0.9"/><defs><linearGradient id="gemb" x1="0" y1="0" x2="0" y2="1"><stop offset="0" stop-color="#d5d9e0"/><stop offset="1" stop-color="#a9b1bf"/></linearGradient></defs><path d="M247,57.4 H255.8 Q261,59.6 262.5,64 V73 H247 Z" fill="#fbfbfc"/><path d="M247,67 H252 Q254.3,70 255,73 H247 Z" fill="#dfe2e8"/><path d="M255.4,73 Q254,68 257.5,65 L262.3,63.6 V73 Z" fill="url(#gemb)"/><path d="M247,57.4 H255.8 Q261,59.6 262.5,64 V73" fill="none" stroke="#0f2458" stroke-width="1.2"/><path d="M247.8,63.4 L256.6,69.6 M247.8,63.4 L253.4,59.4 M252.2,66.4 L256,62.6 M256.6,69.6 L261,65.2" fill="none" stroke="#0a50c0" stroke-width="1.7"/><path d="M250,94.5 H247.5 V82.5 H258.5 L262.5,86.5 V94.5 H256.5" fill="#e4e6ea" stroke="#3a3f4b" stroke-width="1"/><path d="M258.5,82.5 V86.5 H262.5" fill="#fff" stroke="#3a3f4b" stroke-width="0.8"/><path d="M250.3,91 L252.3,89 H257.3 V94.5 L255.3,96.7 H250.3 Z" fill="#9ccbf0" stroke="#1a7ad8" stroke-width="1" stroke-linejoin="round"/><path d="M250.3,91 H255.3 V96.7 M255.3,91 L257.3,89" fill="none" stroke="#1a7ad8" stroke-width="0.8"/><path d="M247.7,120.5 V109.5 L251.5,105.7 L253.8,107.5 V108.5 L262.2,116 L262.5,117.5 L259,120.5 Z" fill="#f4f6fa" stroke="#1c2b5e" stroke-width="1" stroke-linejoin="round"/><path d="M251.5,109.5 L260,117.3 H251.5 Z" fill="#a9c3e8" stroke="#1a3fae" stroke-width="1" stroke-linejoin="round"/><path d="M260,117.3 L262.3,116.2" stroke="#8a8fa0" stroke-width="1.2"/><path d="M324.5,64.5 L327,62 H334.5 V70 L332,72.7 H324.5 Z" fill="#eef0f3" stroke="#3a3f4b" stroke-width="0.9" stroke-linejoin="round"/><path d="M332,65 V72.5 M332,65 L334.5,62.3" stroke="#b8bcc6" stroke-width="0.8" fill="none"/><rect x="319.5" y="57.5" width="8.3" height="8" fill="#8ea2c8" stroke="#3a3f4b" stroke-width="0.9"/><path d="M320,65 L323,61.5 L325,63.5 L327.3,62 V65 Z" fill="#6a7488"/><circle cx="324.6" cy="60.4" r="1.4" fill="#ffe838"/><path d="M321.5,67.2 V69.5 H325.2" stroke="#111" stroke-width="1.1" fill="none"/><polygon points="324.6,67.6 327,69.5 324.6,71.4" fill="#111"/><path d="M320.5,81.7 H329.6 L333.5,85.6 V96.5 H320.5 Z" fill="#f1f2f5" stroke="#3a3f4b" stroke-width="1" stroke-linejoin="round"/><path d="M329.6,81.7 V85.6 H333.5" fill="#fff" stroke="#3a3f4b" stroke-width="0.8"/><path d="M319,88.2 H323.6 V86 L327.8,89.5 L323.6,93 V90.8 H319 Z" fill="#2a86e0" stroke="#1560b8" stroke-width="0.4"/><path d="M467.5,64.5 L475.5,57.3 H479.3 L483,61.5 V72.5 H472 L467.5,68 Z" fill="#e3e4e8" stroke="#1c2b5e" stroke-width="1" stroke-linejoin="round"/><path d="M467.5,64.5 L471.3,68.3 V72 L467.8,68.2 Z" fill="#b7bac4"/><path d="M467.7,64.5 L475.5,57.5 L480,61 L471.3,68.3 Z" fill="#8fb0e0" stroke="#1a3fae" stroke-width="0.9" stroke-linejoin="round"/><path d="M467.5,85.5 L471,81.7 H482.7 V92.7 L479,96.5 H467.5 Z" fill="#fafafb" stroke="#1c2b5e" stroke-width="1" stroke-linejoin="round"/><path d="M479,85.5 L482.7,81.7 V92.7 L479,96.5 Z" fill="#b4b7c0"/><path d="M467.5,85.5 H479 V96.5 M479,85.5 L482.7,81.7" fill="none" stroke="#1c2b5e" stroke-width="0.9"/><rect x="469.6" y="87.5" width="6.6" height="6.6" fill="#9ab7e4" stroke="#1a3fae" stroke-width="1.1"/><rect x="472.3" y="88.2" width="3.3" height="3.3" fill="#fff"/><path d="M467.5,111.5 L472,105.7 H474.8 L480.5,116.5 L476,120.7 H467.5 Z" fill="#dedfe4" stroke="#1c2b5e" stroke-width="1" stroke-linejoin="round"/><path d="M470.3,108 L472,105.8 H474.8 L480.5,116.5 L476,120.6 Z" fill="#9ab7e4" stroke="#1a3fae" stroke-width="0.9" stroke-linejoin="round"/><path d="M472.5,106 L478.2,118.4" stroke="#1a3fae" stroke-width="0.8"/><path d="M482.6,113.3 L479.3,106.6" stroke="#111" stroke-width="1"/><polygon points="478.2,105.6 481.5,106.6 479.2,108.6" fill="#111"/><defs><linearGradient id="gcyl" x1="0" y1="0" x2="1" y2="0"><stop offset="0" stop-color="#c9cbd0"/><stop offset="0.4" stop-color="#ffffff"/><stop offset="1" stop-color="#b4b6bc"/></linearGradient></defs><rect x="546" y="57.5" width="11.6" height="15" rx="1" fill="url(#gcyl)" stroke="#6a6d75" stroke-width="0.6"/><path d="M545.2,62.6 L558.4,59.6" stroke="#3e4148" stroke-width="0.95"/><path d="M545.2,65.60000000000001 L558.4,62.6" stroke="#3e4148" stroke-width="0.95"/><path d="M545.2,68.60000000000001 L558.4,65.60000000000001" stroke="#3e4148" stroke-width="0.95"/><path d="M545.2,71.60000000000001 L558.4,68.60000000000001" stroke="#3e4148" stroke-width="0.95"/><path d="M544.5,88.3 L547.5,85.3 L549.4,87.3 V83.3 L551.3,81.4 H559.5 V89.5 L552.7,96.5 H544.5 Z" fill="#a9c1e4" stroke="#1f4e9a" stroke-width="1.1" stroke-linejoin="round"/><path d="M550,83.6 L551.6,82.1 H558.8 L557.3,83.6 Z" fill="#f4f8fd"/><path d="M545.2,88.6 L547.5,86.3 L549.3,88.4 L549.3,88.6 Z" fill="#f4f8fd"/><path d="M557.5,83.9 L558.9,82.5 V89.2 L557.5,90.6 Z" fill="#e8effa"/><path d="M553,91.3 H557 L552.8,95.8 Z" fill="#5f86c6"/><path d="M552.6,96.3 V91.2 H557.4" fill="none" stroke="#1f4e9a" stroke-width="0.9"/><path d="M552.2,91 V96" stroke="#f4f8fd" stroke-width="0.7"/><path d="M544.5,113 L553.5,106.3 L559.6,109.3 V112.3 L550,119.7 L544.5,116.3 Z" fill="#bfe4f6" stroke="#1a86d0" stroke-width="1" stroke-linejoin="round"/><path d="M544.5,113 L553.5,106.3 L559.6,109.3 L550,116.2 Z" fill="#f2f2f4" stroke="#3a3f4b" stroke-width="0.9" stroke-linejoin="round"/><path d="M553.3,107.5 L558,109.7 L551,114.6 Z" fill="#c9cbd0"/><path d="M657.5,61 L661,57.5 H672.6 V69 L669,72.5 H657.5 Z" fill="#e3e4e8" stroke="#1c2b5e" stroke-width="1" stroke-linejoin="round"/><path d="M657.5,61 L661,57.5 H672.6 V63 L669,66 Q666,68.5 663.5,66.5 Q660.5,64.5 657.5,67 Z" fill="#a3bfe6"/><path d="M658,61.2 L661.2,58 H672 L669,61.2 Z" fill="#d3e0f3"/><path d="M669,61.2 V72.3" stroke="#8a93ad" stroke-width="0.7"/><path d="M657.5,61 L661,57.5 H672.6 V64" fill="none" stroke="#1a3fae" stroke-width="1"/><path d="M657.3,67 Q660.5,64.3 663.5,66.5 Q666,68.5 669,66 L672.8,62.6" fill="none" stroke="#e01818" stroke-width="1.2"/><path d="M659,96.3 Q657,89 659,84.5 L661.5,81.8" fill="none" stroke="#1c2b5e" stroke-width="1"/><path d="M660.7,85.5 L664,81.7 H670.8 V92 L667,96.4 H660.7 Z" fill="#9ab7e4" stroke="#1a3fae" stroke-width="1" stroke-linejoin="round"/><path d="M661,85.5 L664,82 H670.5 L667.3,85.5 Z" fill="#dfe9f8"/><path d="M667.3,85.7 L670.6,82.2 V92 L667.3,96 Z" fill="#6d8dc3"/><path d="M668,89.3 H671" stroke="#111" stroke-width="1.2"/><polygon points="670.3,86.6 673.4,89.3 670.3,92" fill="#111"/><path d="M657.5,108 L660,105.6 H666.5 V111.5 L664,114.4 H657.5 Z" fill="#f4f6fa" stroke="#1c2b5e" stroke-width="1" stroke-linejoin="round"/><rect x="658" y="108.4" width="5.6" height="5.6" fill="#9ab7e4"/><path d="M664,108 V114.2 M664,108 L666.3,105.8" stroke="#1c2b5e" stroke-width="0.7"/><path d="M666.8,114.8 L672.6,120.8 M672.6,114.8 L666.8,120.8" stroke="#d81818" stroke-width="1.9"/><rect x="870.5" y="57.5" width="12.3" height="12" fill="url(#ggr)" stroke="#3a3f4b" stroke-width="1"/><path d="M867.3,72.3 L876.6,63.5" stroke="#b8531a" stroke-width="1.6" stroke-linecap="round"/><polygon points="917,64 922.4,64 919.7,67" fill="#444"/><path d="M867,88.5 H882 M874.5,81 V96" stroke="#b8531a" stroke-width="1"/><path d="M874.5,82.6 Q876.3,86.7 880.4,88.5 Q876.3,90.3 874.5,94.4 Q872.7,90.3 868.6,88.5 Q872.7,86.7 874.5,82.6 Z" fill="#f8b07a" stroke="#b8531a" stroke-width="1"/><circle cx="874.5" cy="88.5" r="1.4" fill="#fff" stroke="#5a2a10" stroke-width="0.9"/><polygon points="924,88 929.4,88 926.7,91" fill="#444"/><path d="M868.5,119.5 V106 M868.5,119.5 H882 M868.5,119.5 L878,110.3" stroke="#222" stroke-width="1" fill="none"/><path d="M866.6,107.8 L868.5,105.2 L870.4,107.8 M880.4,117.6 L883,119.5 L880.4,121.4" stroke="#222" stroke-width="1" fill="none"/><rect x="867" y="118" width="3" height="3" fill="#fff" stroke="#1a6ae0" stroke-width="1"/><rect x="939.5" y="54.5" width="23" height="21" fill="#efefef" stroke="#d9d9d9" stroke-width="1"/><rect x="964.5" y="54.5" width="23.5" height="21" fill="#efefef" stroke="#d9d9d9" stroke-width="1"/><rect x="939.5" y="78.5" width="23" height="21" fill="#efefef" stroke="#d9d9d9" stroke-width="1"/><rect x="939.5" y="102.5" width="23" height="21" fill="#efefef" stroke="#d9d9d9" stroke-width="1"/><path d="M945.5,59.5 H956.5 M945.5,59.5 V70.5 H956.5" fill="none" stroke="#222b3c" stroke-width="1"/><rect x="943.5" y="57.5" width="4" height="4" fill="#fff" stroke="#222b3c" stroke-width="1"/><rect x="954.5" y="57.5" width="4" height="4" fill="#8fa9d6" stroke="#1a3fae" stroke-width="1"/><rect x="943.5" y="68.5" width="4" height="4" fill="#8fa9d6" stroke="#1a3fae" stroke-width="1"/><rect x="954.5" y="68.5" width="4" height="4" fill="#8fa9d6" stroke="#1a3fae" stroke-width="1"/><circle cx="950.5" cy="89" r="5.6" fill="none" stroke="#222b3c" stroke-width="1"/><rect x="948.5" y="81.5" width="4" height="4" fill="#fff" stroke="#222b3c" stroke-width="1"/><rect x="943.5" y="86.5" width="4" height="4" fill="#8fa9d6" stroke="#1a3fae" stroke-width="1"/><rect x="954.5" y="86.5" width="4" height="4" fill="#8fa9d6" stroke="#1a3fae" stroke-width="1"/><rect x="948.5" y="92.5" width="4" height="4" fill="#8fa9d6" stroke="#1a3fae" stroke-width="1"/><path d="M943.2,107.5 H947.8 M945.5,105.2 V109.8" stroke="#222" stroke-width="1"/><path d="M954.2,107.5 H958.8 M956.5,105.2 V109.8" stroke="#222" stroke-width="1"/><path d="M948.2,112.5 H952.8 M950.5,110.2 V114.8" stroke="#222" stroke-width="1"/><rect x="943.5" y="111.5" width="4" height="4" fill="#8fa9d6" stroke="#1a3fae" stroke-width="1"/><rect x="954.5" y="111.5" width="4" height="4" fill="#fff" stroke="#222b3c" stroke-width="1"/><rect x="948.5" y="116.5" width="4" height="4" fill="#8fa9d6" stroke="#1a3fae" stroke-width="1"/><path d="M968.5,59.5 H970.5 Q973,60.5 973,64.5 Q973,66.5 971,67 V70.5 H968.5 Z" fill="#fff" stroke="#3a3f4b" stroke-width="0.9"/><path d="M982.5,59.5 H980.5 Q978,60.5 978,64.5 Q978,66.5 980,67 V70.5 H982.5 Z" fill="#9fd0f4" stroke="#1a7ad8" stroke-width="0.9"/><path d="M975.5,57 V73" stroke="#111" stroke-width="1.1"/><path d="M1039.8,61.8 L1045,58.3 L1054.6,65 L1048,71.3 Z" fill="#fff" stroke="#222" stroke-width="0.8" stroke-linejoin="round"/><path d="M1039.8,61.8 L1045,58.3 L1050.7,62.3 L1045,67.6 Z" fill="#c9a0ee" stroke="#7b3fb8" stroke-width="0.6"/><circle cx="1039.8" cy="61.8" r="0.9" fill="#111"/><circle cx="1045" cy="58.3" r="0.9" fill="#111"/><circle cx="1054.6" cy="65" r="0.9" fill="#111"/><circle cx="1048" cy="71.3" r="0.9" fill="#111"/><circle cx="1050.7" cy="62.3" r="0.9" fill="#111"/><circle cx="1045" cy="67.6" r="0.9" fill="#111"/><path d="M1039.5,82.7 Q1045,80.6 1050.8,82.4 L1047,86.6 Q1044,84.5 1039.5,82.7 Z" fill="#f6a050" stroke="#d87018" stroke-width="0.7" stroke-linejoin="round"/><path d="M1042.5,91.5 L1048.5,88.7 L1054.5,92.5 L1048.5,96.6 Z" fill="#b88ae0" stroke="#8a52c4" stroke-width="0.7" stroke-linejoin="round"/><path d="M1045.5,90.2 L1051.5,94.5 M1051.5,90.6 L1045.5,94" stroke="#8a52c4" stroke-width="0.5"/><path d="M1050.5,84.5 Q1054,84.6 1053.6,88" fill="none" stroke="#111" stroke-width="1"/><polygon points="1051.8,87.3 1055.4,87.3 1053.6,89.8" fill="#111"/><rect x="1117.5" y="57.5" width="14" height="15" rx="0.8" fill="#f9a865" stroke="#c25a12" stroke-width="1"/><path d="M1118.6,58.6 H1123.5 V71.5" fill="none" stroke="#fcd2ae" stroke-width="0.8"/><path d="M1124.5,57.5 V72.5" stroke="#c25a12" stroke-width="1"/><path d="M1122,60.5 H1127 M1122,63 H1127 M1122,65.5 H1127 M1122,68 H1127 M1122,70.3 H1127" stroke="#2a2a30" stroke-width="0.7"/><path d="M1117.5,81.5 H1132.5 V96 H1125.5 L1123.5,94 V90.5 H1117.5 Z" fill="#f9a865" stroke="#c25a12" stroke-width="1" stroke-linejoin="round"/><path d="M1118.6,82.6 H1131.4" stroke="#fcd2ae" stroke-width="0.8"/><rect x="1121.5" y="105.5" width="11" height="9.6" rx="0.6" fill="#f9a865" stroke="#c25a12" stroke-width="1"/><circle cx="1123" cy="115" r="5.7" fill="#fbb985" stroke="#c25a12" stroke-width="1"/><path d="M1121.6,115 V109.6 Q1128,109.4 1128.7,115 Z" fill="#b7cdec" stroke="#1a3fae" stroke-width="1" stroke-linejoin="round"/><polygon points="583,133 591.4,133 587.2,137" fill="#444"/></svg>
<svg style="position:absolute;left:0px;top:0px" width="1161" height="787" viewBox="0 0 1161 787"><defs><linearGradient id="gvg" x1="0" y1="0" x2="0" y2="1"><stop offset="0" stop-color="#3d8200"/><stop offset="1" stop-color="#86b600"/></linearGradient><linearGradient id="gvb" x1="0" y1="0" x2="0" y2="1"><stop offset="0" stop-color="#3d82d6"/><stop offset="1" stop-color="#86b6ea"/></linearGradient><linearGradient id="gyel" x1="0" y1="0" x2="1" y2="1"><stop offset="0" stop-color="#fff200"/><stop offset="1" stop-color="#f4b400"/></linearGradient><radialGradient id="gred" cx="0.4" cy="0.35" r="0.7"><stop offset="0" stop-color="#ff8a8a"/><stop offset="0.5" stop-color="#ec2a2a"/><stop offset="1" stop-color="#c41010"/></radialGradient></defs><path d="M54,153.5 L62.5,162 M62.5,153.5 L54,162" stroke="#333" stroke-width="1" fill="none"/><path d="M128,155.5 H137 M132.5,151 V160" stroke="#fff" stroke-width="1.8" fill="none"/><circle cx="201" cy="155" r="4.6" fill="none" stroke="#f0f0f0" stroke-width="1"/><path d="M204.3,158.6 L208,162.3" stroke="#f0f0f0" stroke-width="1.1"/><path d="M219,152.5 H231 M219,156.5 H231 M219,160.5 H231" stroke="#f0f0f0" stroke-width="1" fill="none"/><path d="M13.5,189 V197" stroke="#6a6a6a" stroke-width="1" stroke-dasharray="1 1" fill="none"/><path d="M13.5,205 V276" stroke="#6a6a6a" stroke-width="1" stroke-dasharray="1 1" fill="none"/><path d="M13.5,285 V456" stroke="#6a6a6a" stroke-width="1" stroke-dasharray="1 1" fill="none"/><path d="M13.5,465 V476" stroke="#6a6a6a" stroke-width="1" stroke-dasharray="1 1" fill="none"/><path d="M13.5,485 V496" stroke="#6a6a6a" stroke-width="1" stroke-dasharray="1 1" fill="none"/><path d="M13.5,505 V516" stroke="#6a6a6a" stroke-width="1" stroke-dasharray="1 1" fill="none"/><path d="M13.5,525 V540" stroke="#6a6a6a" stroke-width="1" stroke-dasharray="1 1" fill="none"/><path d="M29.5,209 V216" stroke="#6a6a6a" stroke-width="1" stroke-dasharray="1 1" fill="none"/><path d="M29.5,225 V236" stroke="#6a6a6a" stroke-width="1" stroke-dasharray="1 1" fill="none"/><path d="M29.5,245 V256" stroke="#6a6a6a" stroke-width="1" stroke-dasharray="1 1" fill="none"/><path d="M29.5,290 V440" stroke="#6a6a6a" stroke-width="1" stroke-dasharray="1 1" fill="none"/><path d="M18,200.5 H22" stroke="#6a6a6a" stroke-width="1" stroke-dasharray="1 1" fill="none"/><path d="M18,280.5 H22" stroke="#6a6a6a" stroke-width="1" stroke-dasharray="1 1" fill="none"/><path d="M18,460.5 H22" stroke="#6a6a6a" stroke-width="1" stroke-dasharray="1 1" fill="none"/><path d="M18,480.5 H22" stroke="#6a6a6a" stroke-width="1" stroke-dasharray="1 1" fill="none"/><path d="M18,500.5 H22" stroke="#6a6a6a" stroke-width="1" stroke-dasharray="1 1" fill="none"/><path d="M18,520.5 H22" stroke="#6a6a6a" stroke-width="1" stroke-dasharray="1 1" fill="none"/><path d="M14,540.5 H23" stroke="#6a6a6a" stroke-width="1" stroke-dasharray="1 1" fill="none"/><path d="M34,220.5 H38" stroke="#6a6a6a" stroke-width="1" stroke-dasharray="1 1" fill="none"/><path d="M34,240.5 H38" stroke="#6a6a6a" stroke-width="1" stroke-dasharray="1 1" fill="none"/><path d="M34,260.5 H38" stroke="#6a6a6a" stroke-width="1" stroke-dasharray="1 1" fill="none"/><path d="M30,300.5 H38" stroke="#6a6a6a" stroke-width="1" stroke-dasharray="1 1" fill="none"/><path d="M30,320.5 H38" stroke="#6a6a6a" stroke-width="1" stroke-dasharray="1 1" fill="none"/><path d="M30,340.5 H38" stroke="#6a6a6a" stroke-width="1" stroke-dasharray="1 1" fill="none"/><path d="M30,360.5 H38" stroke="#6a6a6a" stroke-width="1" stroke-dasharray="1 1" fill="none"/><path d="M30,380.5 H38" stroke="#6a6a6a" stroke-width="1" stroke-dasharray="1 1" fill="none"/><path d="M30,400.5 H38" stroke="#6a6a6a" stroke-width="1" stroke-dasharray="1 1" fill="none"/><path d="M30,420.5 H38" stroke="#6a6a6a" stroke-width="1" stroke-dasharray="1 1" fill="none"/><path d="M30,440.5 H38" stroke="#6a6a6a" stroke-width="1" stroke-dasharray="1 1" fill="none"/><path d="M8.8,197.2 L12.8,201.5 L16.8,197.2" fill="none" stroke="#2a2a2a" stroke-width="1.6"/><path d="M8.8,277.2 L12.8,281.5 L16.8,277.2" fill="none" stroke="#2a2a2a" stroke-width="1.6"/><path d="M26.7,215.5 L31,219.5 L26.7,223.5" fill="none" stroke="#a0a0a0" stroke-width="1.9"/><path d="M26.7,235.5 L31,239.5 L26.7,243.5" fill="none" stroke="#a0a0a0" stroke-width="1.9"/><path d="M26.7,255.5 L31,259.5 L26.7,263.5" fill="none" stroke="#a0a0a0" stroke-width="1.9"/><path d="M11.0,455.5 L15.3,459.5 L11.0,463.5" fill="none" stroke="#a0a0a0" stroke-width="1.9"/><path d="M11.0,475.5 L15.3,479.5 L11.0,483.5" fill="none" stroke="#a0a0a0" stroke-width="1.9"/><path d="M11.0,495.5 L15.3,499.5 L11.0,503.5" fill="none" stroke="#a0a0a0" stroke-width="1.9"/><path d="M11.0,515.5 L15.3,519.5 L11.0,523.5" fill="none" stroke="#a0a0a0" stroke-width="1.9"/><path d="M7.5,181 L10.5,176.5 H13 V174.8 L15.5,172.6 H21.5 V179 L19,181.5 H16.2 L13,185.5 H7.5 Z" fill="#ffee40" stroke="#222" stroke-width="0.9" stroke-linejoin="round"/><path d="M13.4,175 H19 V181 H13.4 Z" fill="#e8d000" stroke="#222" stroke-width="0.8"/><path d="M19,175 L21.4,172.8 M8,181 H13" stroke="#222" stroke-width="0.7" fill="none"/><path d="M7.8,181.3 H12.8 L11,185 H7.8 Z" fill="#fff7a0"/><path d="M23.5,200.5 V192.5 Q23.5,191.6 24.5,191.6 H28.5 L30,193.4 H34.5 Q35.5,193.4 35.5,194.4 V196" fill="#e8c890" stroke="#8a6a3a" stroke-width="0.9"/><path d="M23.6,200.8 L27,195.6 H37.6 L34.4,200.8 Z" fill="#f4dcb0" stroke="#8a6a3a" stroke-width="0.9" stroke-linejoin="round"/><path d="M30.5,203 H31.5 V200 Q31.5,199 32.5,199 H37 Q38,199 38,200 V204 Q38,205 37,205 H35.5 V206 Q35.5,207 34.5,207 H31.5 Q30.5,207 30.5,206 Z" fill="#eef0f6" stroke="#2a3350" stroke-width="0.9"/><rect x="33" y="200.6" width="3.6" height="3.2" fill="#b8c4e0" stroke="#2a3350" stroke-width="0.6"/><path d="M39.5,215 L43,211.6 H54 V222.5 L50,226.5 H39.5 Z" fill="#ffe800" stroke="#1a1a1a" stroke-width="1" stroke-linejoin="round"/><path d="M40,215 L43.2,212.1 H53.4 L50,215 Z" fill="#fff9b0"/><rect x="40" y="215.3" width="9.8" height="10.7" fill="url(#gyel)"/><path d="M50.3,215.3 L53.5,212.3 V222.3 L50.3,225.8 Z" fill="#d9a400"/><path d="M50,215 V226.3" stroke="#1a1a1a" stroke-width="0.8"/><path d="M39.5,235 L43,231.6 H54 V242.5 L50,246.5 H39.5 Z" fill="#ffe800" stroke="#1a1a1a" stroke-width="1" stroke-linejoin="round"/><path d="M40,235 L43.2,232.1 H53.4 L50,235 Z" fill="#fff9b0"/><rect x="40" y="235.3" width="9.8" height="10.7" fill="url(#gyel)"/><path d="M50.3,235.3 L53.5,232.3 V242.3 L50.3,245.8 Z" fill="#d9a400"/><path d="M50,235 V246.3" stroke="#1a1a1a" stroke-width="0.8"/><path d="M39.5,255 L43,251.6 H54 V262.5 L50,266.5 H39.5 Z" fill="#ffe800" stroke="#1a1a1a" stroke-width="1" stroke-linejoin="round"/><path d="M40,255 L43.2,252.1 H53.4 L50,255 Z" fill="#fff9b0"/><rect x="40" y="255.3" width="9.8" height="10.7" fill="url(#gyel)"/><path d="M50.3,255.3 L53.5,252.3 V262.3 L50.3,265.8 Z" fill="#d9a400"/><path d="M50,255 V266.3" stroke="#1a1a1a" stroke-width="0.8"/><rect x="23" y="271" width="5" height="3" fill="#0a0a0a"/><rect x="24" y="272" width="4" height="2" fill="url(#gvg)"/><rect x="25" y="275" width="1.4" height="10" fill="#0a0a0a"/><rect x="25" y="276.6" width="3" height="1" fill="#0a0a0a"/><rect x="25" y="284" width="2.2" height="1" fill="#0a0a0a"/><rect x="29" y="275" width="5" height="3" fill="#0a0a0a"/><rect x="30" y="276" width="4" height="2" fill="url(#gvg)"/><rect x="31" y="279" width="1" height="2.4" fill="#0a0a0a"/><rect x="31" y="280.6" width="2" height="1" fill="#0a0a0a"/><rect x="34" y="279" width="5" height="3" fill="#0a0a0a"/><rect x="35" y="280" width="4" height="2" fill="url(#gvg)"/><rect x="28" y="283" width="5" height="3" fill="#0a0a0a"/><rect x="29" y="284" width="4" height="2" fill="url(#gvg)"/><rect x="39" y="311" width="5" height="3" fill="#0a0a0a"/><rect x="40" y="312" width="4" height="2" fill="url(#gvb)"/><rect x="41" y="315" width="1.4" height="10" fill="#0a0a0a"/><rect x="41" y="316.6" width="3" height="1" fill="#0a0a0a"/><rect x="41" y="324" width="2.2" height="1" fill="#0a0a0a"/><rect x="45" y="315" width="5" height="3" fill="#0a0a0a"/><rect x="46" y="316" width="4" height="2" fill="url(#gvb)"/><rect x="47" y="319" width="1" height="2.4" fill="#0a0a0a"/><rect x="47" y="320.6" width="2" height="1" fill="#0a0a0a"/><rect x="50" y="319" width="5" height="3" fill="#0a0a0a"/><rect x="51" y="320" width="4" height="2" fill="url(#gvb)"/><rect x="44" y="323" width="5" height="3" fill="#0a0a0a"/><rect x="45" y="324" width="4" height="2" fill="url(#gvb)"/><rect x="39" y="331" width="5" height="3" fill="#0a0a0a"/><rect x="40" y="332" width="4" height="2" fill="url(#gvb)"/><rect x="41" y="335" width="1.4" height="10" fill="#0a0a0a"/><rect x="41" y="336.6" width="3" height="1" fill="#0a0a0a"/><rect x="41" y="344" width="2.2" height="1" fill="#0a0a0a"/><rect x="45" y="335" width="5" height="3" fill="#0a0a0a"/><rect x="46" y="336" width="4" height="2" fill="url(#gvb)"/><rect x="47" y="339" width="1" height="2.4" fill="#0a0a0a"/><rect x="47" y="340.6" width="2" height="1" fill="#0a0a0a"/><rect x="50" y="339" width="5" height="3" fill="#0a0a0a"/><rect x="51" y="340" width="4" height="2" fill="url(#gvb)"/><rect x="44" y="343" width="5" height="3" fill="#0a0a0a"/><rect x="45" y="344" width="4" height="2" fill="url(#gvb)"/><rect x="39" y="351" width="5" height="3" fill="#0a0a0a"/><rect x="40" y="352" width="4" height="2" fill="url(#gvb)"/><rect x="41" y="355" width="1.4" height="10" fill="#0a0a0a"/><rect x="41" y="356.6" width="3" height="1" fill="#0a0a0a"/><rect x="41" y="364" width="2.2" height="1" fill="#0a0a0a"/><rect x="45" y="355" width="5" height="3" fill="#0a0a0a"/><rect x="46" y="356" width="4" height="2" fill="url(#gvb)"/><rect x="47" y="359" width="1" height="2.4" fill="#0a0a0a"/><rect x="47" y="360.6" width="2" height="1" fill="#0a0a0a"/><rect x="50" y="359" width="5" height="3" fill="#0a0a0a"/><rect x="51" y="360" width="4" height="2" fill="url(#gvb)"/><rect x="44" y="363" width="5" height="3" fill="#0a0a0a"/><rect x="45" y="364" width="4" height="2" fill="url(#gvb)"/><rect x="39" y="371" width="5" height="3" fill="#0a0a0a"/><rect x="40" y="372" width="4" height="2" fill="url(#gvb)"/><rect x="41" y="375" width="1.4" height="10" fill="#0a0a0a"/><rect x="41" y="376.6" width="3" height="1" fill="#0a0a0a"/><rect x="41" y="384" width="2.2" height="1" fill="#0a0a0a"/><rect x="45" y="375" width="5" height="3" fill="#0a0a0a"/><rect x="46" y="376" width="4" height="2" fill="url(#gvb)"/><rect x="47" y="379" width="1" height="2.4" fill="#0a0a0a"/><rect x="47" y="380.6" width="2" height="1" fill="#0a0a0a"/><rect x="50" y="379" width="5" height="3" fill="#0a0a0a"/><rect x="51" y="380" width="4" height="2" fill="url(#gvb)"/><rect x="44" y="383" width="5" height="3" fill="#0a0a0a"/><rect x="45" y="384" width="4" height="2" fill="url(#gvb)"/><rect x="39" y="391" width="5" height="3" fill="#0a0a0a"/><rect x="40" y="392" width="4" height="2" fill="url(#gvg)"/><rect x="41" y="395" width="1.4" height="10" fill="#0a0a0a"/><rect x="41" y="396.6" width="3" height="1" fill="#0a0a0a"/><rect x="41" y="404" width="2.2" height="1" fill="#0a0a0a"/><rect x="45" y="395" width="5" height="3" fill="#0a0a0a"/><rect x="46" y="396" width="4" height="2" fill="url(#gvg)"/><rect x="47" y="399" width="1" height="2.4" fill="#0a0a0a"/><rect x="47" y="400.6" width="2" height="1" fill="#0a0a0a"/><rect x="50" y="399" width="5" height="3" fill="#0a0a0a"/><rect x="51" y="400" width="4" height="2" fill="url(#gvg)"/><rect x="44" y="403" width="5" height="3" fill="#0a0a0a"/><rect x="45" y="404" width="4" height="2" fill="url(#gvg)"/><rect x="39" y="411" width="5" height="3" fill="#0a0a0a"/><rect x="40" y="412" width="4" height="2" fill="url(#gvg)"/><rect x="41" y="415" width="1.4" height="10" fill="#0a0a0a"/><rect x="41" y="416.6" width="3" height="1" fill="#0a0a0a"/><rect x="41" y="424" width="2.2" height="1" fill="#0a0a0a"/><rect x="45" y="415" width="5" height="3" fill="#0a0a0a"/><rect x="46" y="416" width="4" height="2" fill="url(#gvg)"/><rect x="47" y="419" width="1" height="2.4" fill="#0a0a0a"/><rect x="47" y="420.6" width="2" height="1" fill="#0a0a0a"/><rect x="50" y="419" width="5" height="3" fill="#0a0a0a"/><rect x="51" y="420" width="4" height="2" fill="url(#gvg)"/><rect x="44" y="423" width="5" height="3" fill="#0a0a0a"/><rect x="45" y="424" width="4" height="2" fill="url(#gvg)"/><rect x="39" y="431" width="5" height="3" fill="#0a0a0a"/><rect x="40" y="432" width="4" height="2" fill="url(#gvg)"/><rect x="41" y="435" width="1.4" height="10" fill="#0a0a0a"/><rect x="41" y="436.6" width="3" height="1" fill="#0a0a0a"/><rect x="41" y="444" width="2.2" height="1" fill="#0a0a0a"/><rect x="45" y="435" width="5" height="3" fill="#0a0a0a"/><rect x="46" y="436" width="4" height="2" fill="url(#gvg)"/><rect x="47" y="439" width="1" height="2.4" fill="#0a0a0a"/><rect x="47" y="440.6" width="2" height="1" fill="#0a0a0a"/><rect x="50" y="439" width="5" height="3" fill="#0a0a0a"/><rect x="51" y="440" width="4" height="2" fill="url(#gvg)"/><rect x="44" y="443" width="5" height="3" fill="#0a0a0a"/><rect x="45" y="444" width="4" height="2" fill="url(#gvg)"/><rect x="39.5" y="291.5" width="15" height="14" fill="#fff" stroke="#111" stroke-width="1"/><path d="M42,298.5 L45.3,303.2 Q48.5,296.5 54.3,292.2 Q49,294.5 45.6,300 L43.6,297.6 Z" fill="#3b78c4" stroke="#3b78c4" stroke-width="0.6" stroke-linejoin="round"/><path d="M61.2,298 V295.5 Q61.2,291.8 64.5,291.8 Q67.8,291.8 67.8,295.5 V298" fill="none" stroke="#8c8c8c" stroke-width="1.5"/><rect x="59.3" y="297.2" width="10.4" height="8.6" rx="1.2" fill="#f2f2f2" stroke="#8a8a8a" stroke-width="0.7"/><path d="M59.8,298.7 H69.2" stroke="#3c3c3c" stroke-width="1"/><path d="M59.8,300.5 H69.2" stroke="#3c3c3c" stroke-width="1"/><path d="M59.8,302.3 H69.2" stroke="#3c3c3c" stroke-width="1"/><path d="M59.8,304.1 H69.2" stroke="#3c3c3c" stroke-width="1"/><path d="M23.5,465.5 V453 Q23.5,452 24.5,452 H29 Q30,452 30.5,453 L31,454 H37.5 Q38.5,454 38.5,455 V465.5 Z" fill="#f3dcae" stroke="#9a7d50" stroke-width="1" stroke-linejoin="round"/><path d="M24.3,456.2 H37.8" stroke="#fbeed2" stroke-width="1"/><path d="M23.5,474.5 L26.2,471.6 H32.6 V483.4 L29.8,486.4 H23.5 Z" fill="#ffe800" stroke="#111" stroke-width="1" stroke-linejoin="round"/><path d="M24,474.4 L26.4,472 H32.2 L29.8,474.4 Z" fill="#4f94e4"/><rect x="24" y="474.9" width="5.6" height="11" fill="url(#gyel)"/><path d="M30.1,474.8 L32.2,472.6 V483.2 L30.1,485.6 Z" fill="#c99700"/><path d="M29.8,474.5 V486.2" stroke="#111" stroke-width="0.8"/><path d="M36.5,486.5 V473" stroke="#e01010" stroke-width="1.1"/><polygon points="34.6,475 36.5,471.2 38.4,475" fill="#e01010"/><path d="M23.5,494.5 L26.2,491.6 H32.6 V503.4 L29.8,506.4 H23.5 Z" fill="#ffe800" stroke="#111" stroke-width="1" stroke-linejoin="round"/><path d="M24,494.4 L26.4,492 H32.2 L29.8,494.4 Z" fill="#4f94e4"/><rect x="24" y="494.9" width="5.6" height="11" fill="url(#gyel)"/><path d="M30.1,494.8 L32.2,492.6 V503.2 L30.1,505.6 Z" fill="#c99700"/><path d="M29.8,494.5 V506.2" stroke="#111" stroke-width="0.8"/><path d="M36.5,506.5 V493" stroke="#e01010" stroke-width="1.1"/><polygon points="34.6,495 36.5,491.2 38.4,495" fill="#e01010"/><path d="M23.5,514.5 L26.2,511.6 H32.6 V523.4 L29.8,526.4 H23.5 Z" fill="#ffe800" stroke="#111" stroke-width="1" stroke-linejoin="round"/><path d="M24,514.4 L26.4,512 H32.2 L29.8,514.4 Z" fill="#4f94e4"/><rect x="24" y="514.9" width="5.6" height="11" fill="url(#gyel)"/><path d="M30.1,514.8 L32.2,512.6 V523.2 L30.1,525.6 Z" fill="#c99700"/><path d="M29.8,514.5 V526.2" stroke="#111" stroke-width="0.8"/><path d="M36.5,526.5 V513" stroke="#e01010" stroke-width="1.1"/><polygon points="34.6,515 36.5,511.2 38.4,515" fill="#e01010"/><path d="M27.5,531.5 H33.7 L37.7,535.6 V541.6 L33.7,545.7 H27.5 L23.4,541.6 V535.6 Z" fill="url(#gred)" stroke="#111" stroke-width="1" stroke-linejoin="round"/><path d="M27.4,535.4 L33.8,541.9 M33.8,535.4 L27.4,541.9" stroke="#fff" stroke-width="2.2" stroke-linecap="round"/></svg>
</body></html>
